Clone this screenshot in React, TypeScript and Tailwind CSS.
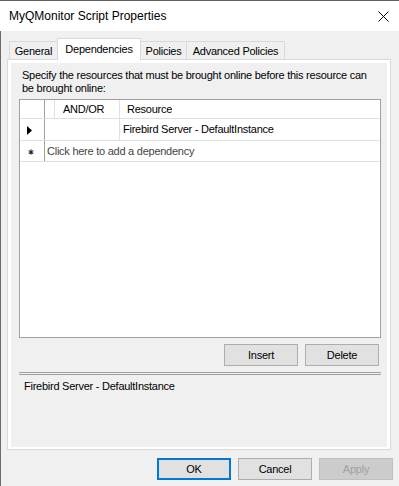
export default function App() {
  const tab = "border-[#d9d9d9] text-center";
  return (
    <div className="w-[399px] h-[486px] overflow-hidden bg-[#f0f0f0] border-t border-[#5f5f5f] font-['Liberation_Sans',Arial,sans-serif] text-black">
      {/* title bar */}
      <div className="h-[30px] bg-white flex items-center justify-between pl-[9px] pr-[10px]">
        <span className="text-[12px] leading-[15px] pt-[1px]">MyQMonitor Script Properties</span>
        <svg width="11" height="11" viewBox="0 0 11 11" aria-hidden="true">
          <path d="M0.5 0.5L10.5 10.5M10.5 0.5L0.5 10.5" stroke="#000" strokeWidth="1" />
        </svg>
      </div>

      <div className="h-[455px] border-l border-[#6b6b6b] pl-[6px] pt-[7px] text-[11px] leading-[13px] tracking-[-0.25px]">
        {/* tabs */}
        <div className="flex items-end h-[21px] ml-[2px]">
          <div className={`w-[48px] h-[18px] border-l border-t pt-[3px] ${tab}`}>General</div>
          <div className={`relative z-10 w-[84px] h-[22px] -mb-[1px] bg-white border-l border-t border-r pt-[4px] ${tab}`}>
            Dependencies
          </div>
          <div className={`w-[46px] h-[18px] border-t border-r pt-[3px] ${tab}`}>Policies</div>
          <div className={`w-[98px] h-[18px] border-t border-r pt-[3px] ${tab}`}>Advanced Policies</div>
        </div>

        {/* tab page */}
        <div className="w-[384px] h-[391px] bg-white border border-[#d9d9d9] pt-[3px] pb-[2px] px-[3px]">
          <div className="h-full bg-[#f0f0f0] pl-[8px] pt-[6px]">
            <p className="ml-[3px] whitespace-nowrap">
              Specify the resources that must be brought online before this resource can
              <br />
              be brought online:
            </p>

            {/* grid */}
            <div className="mt-[4px] w-[362px] h-[239px] bg-white border border-[#a0a0a0]">
              <div className="flex h-[19px] border-b border-[#e0e0e0]">
                <div className="w-[25px] border-r border-[#a0a0a0]" />
                <div className="w-[10px] border-r border-[#e0e0e0]" />
                <div className="w-[65px] border-r border-[#e0e0e0] pl-[8px] flex items-center">AND/OR</div>
                <div className="flex-1 pl-[7px] flex items-center">Resource</div>
              </div>
              <div className="flex h-[22px] border-b border-[#e0e0e0]">
                <div className="w-[25px] border-r border-[#a0a0a0] flex items-center pl-[7px] pt-[2px]">
                  <svg width="5" height="9" viewBox="0 0 5 9" aria-hidden="true">
                    <path d="M0 0L5 4.5L0 9Z" fill="#000" />
                  </svg>
                </div>
                <div className="w-[75px] border-r border-[#e0e0e0]" />
                <div className="flex-1 pl-[3px] flex items-center">Firebird Server - DefaultInstance</div>
              </div>
              <div className="flex h-[21px] border-b border-[#e0e0e0]">
                <div className="w-[25px] border-r border-[#a0a0a0] flex items-center pl-[8px] pt-[2px]">
                  <svg width="6" height="6" viewBox="0 0 6 6" aria-hidden="true">
                    <path d="M3 0.3V5.7M0.6 1.6L5.4 4.4M5.4 1.6L0.6 4.4" stroke="#555" strokeWidth="1.2" />
                    <circle cx="3" cy="3" r="1.3" fill="#222" />
                  </svg>
                </div>
                <div className="flex-1 pl-[2px] flex items-center text-[#444]">Click here to add a dependency</div>
              </div>
            </div>

            <div className="w-[362px] flex justify-end gap-[7px] pr-[2px] mt-[6px]">
              <button className="w-[74px] h-[22px] bg-[#e1e1e1] border border-[#adadad]">Insert</button>
              <button className="w-[74px] h-[22px] bg-[#e1e1e1] border border-[#adadad]">Delete</button>
            </div>

            <div className="w-[362px] h-[3px] mt-[6px] border-t border-b border-[#a0a0a0]" />

            <p className="ml-[5px] mt-[5px]">Firebird Server - DefaultInstance</p>
          </div>
        </div>

        {/* dialog buttons */}
        <div className="flex justify-end gap-[7px] pr-[6px] mt-[8px]">
          <button className="w-[74px] h-[22px] bg-[#e1e1e1] border-2 border-[#0078d7]">OK</button>
          <button className="w-[74px] h-[22px] bg-[#e1e1e1] border border-[#adadad]">Cancel</button>
          <button className="w-[74px] h-[22px] bg-[#cccccc] border border-[#bfbfbf] text-[#a0a0a0]">Apply</button>
        </div>
      </div>
    </div>
  );
}
